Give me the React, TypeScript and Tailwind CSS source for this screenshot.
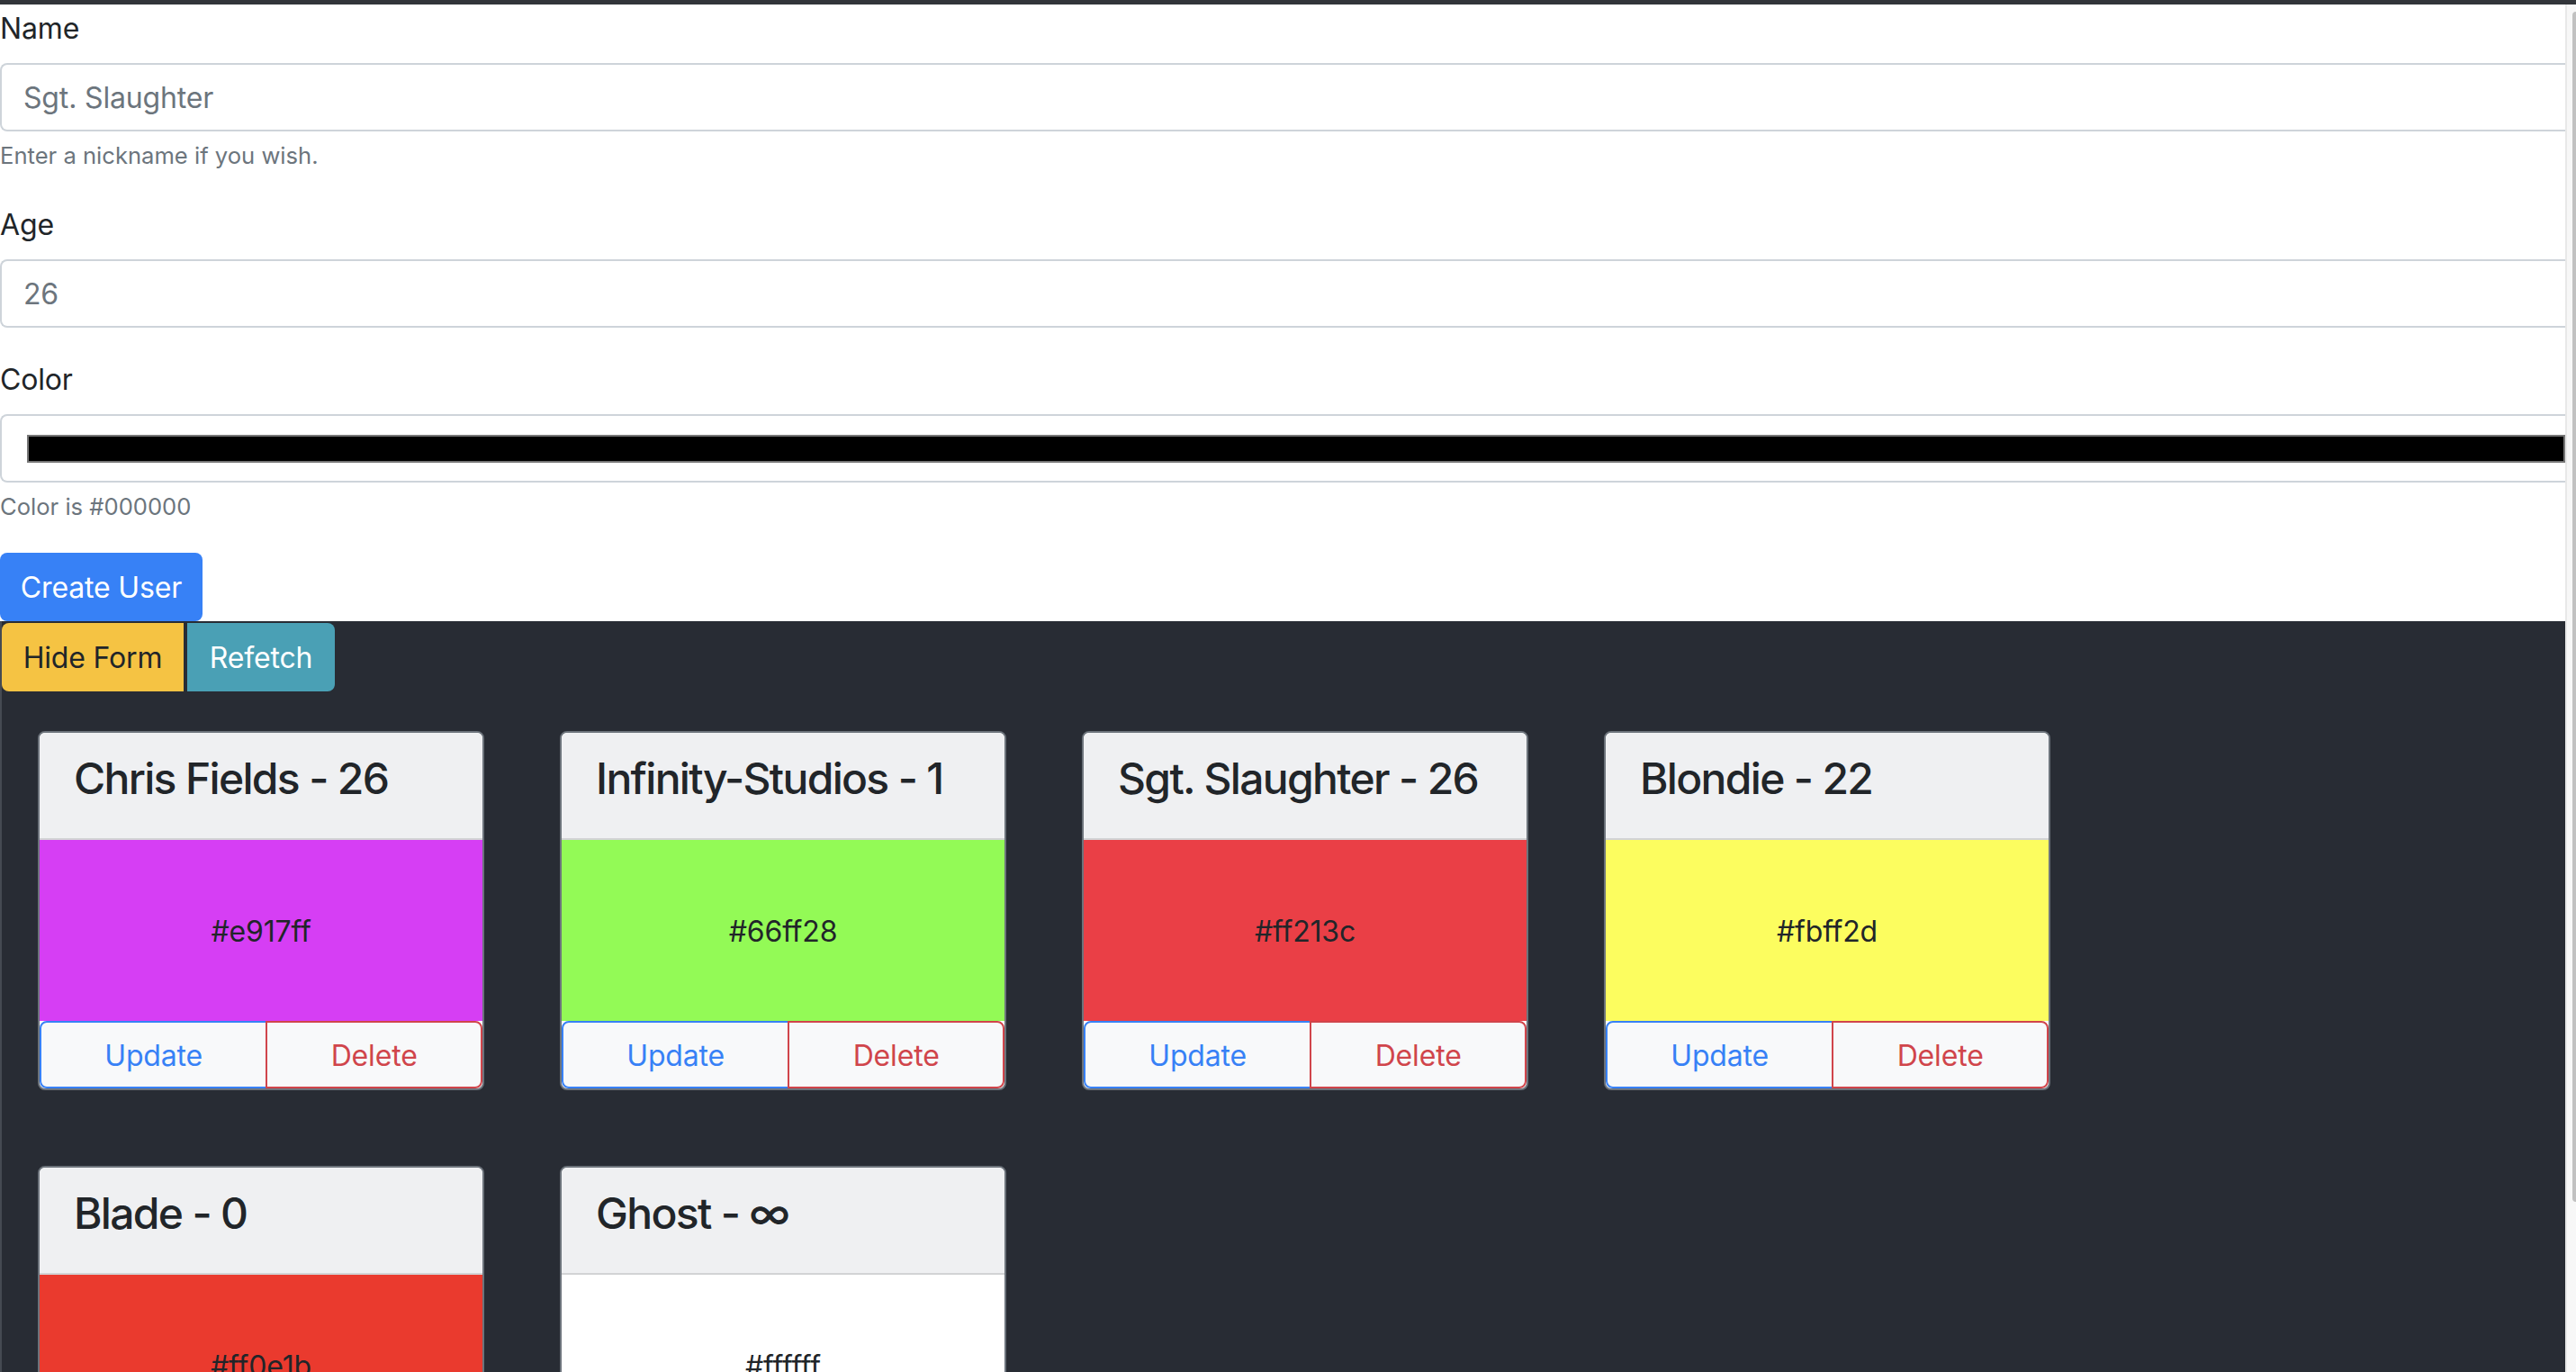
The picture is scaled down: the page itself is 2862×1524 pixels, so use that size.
import React from 'react';

interface User {
  name: string;
  age: string;
  hex: string;
  swatch: string;
}

const users: User[] = [
  { name: 'Chris Fields', age: '26', hex: '#e917ff', swatch: 'bg-[#d63ef4]' },
  { name: 'Infinity-Studios', age: '1', hex: '#66ff28', swatch: 'bg-[#93fa56]' },
  { name: 'Sgt. Slaughter', age: '26', hex: '#ff213c', swatch: 'bg-[#ea3f46]' },
  { name: 'Blondie', age: '22', hex: '#fbff2d', swatch: 'bg-[#fcfd5f]' },
  { name: 'Blade', age: '0', hex: '#ff0e1b', swatch: 'bg-[#ea3a2e]' },
  { name: 'Ghost', age: '∞', hex: '#ffffff', swatch: 'bg-white' },
];

function UserCard({ user }: { user: User }) {
  return (
    <div className="m-[42px] w-[496px] shrink-0 flex flex-col border-2 border-[#6c737b] rounded-[8px] overflow-hidden bg-white">
      <div className="h-[119px] bg-[#eff0f2] border-b-2 border-[#d2d3d5] pl-[38px] pt-[22px]">
        <h4 className="text-[48px] leading-[57.6px] font-medium tracking-[-0.035em] text-[#212529]">
          {user.name} - {user.age}
        </h4>
      </div>
      <div className={`h-[201px] pt-[3px] flex items-center justify-center text-[32px] text-[#212529] ${user.swatch}`}>
        {user.hex}
      </div>
      <div className="h-[75px] flex">
        <button className="flex-auto pt-[2px] border-2 border-[#3781f6] rounded-l-[8px] bg-[#f8f9fa] text-[32px] text-[#3781f6]">
          Update
        </button>
        <button className="relative -ml-[2px] pt-[2px] flex-auto border-2 border-[#d0454b] rounded-r-[8px] bg-[#f8f9fa] text-[32px] text-[#d0454b]">
          Delete
        </button>
      </div>
    </div>
  );
}

export default function App() {
  return (
    <div className="h-[1524px] overflow-hidden flex flex-col bg-white font-['Inter',sans-serif] tracking-[-0.01em] text-[#212529]">
      <div className="h-[5px] shrink-0 bg-[#32353a]" />
      <div className="flex-1 flex min-h-0">
        <div className="flex-1 min-w-0 flex flex-col">
          {/* Form */}
          <div className="pt-[1px]">
            <label className="block pt-[2px] text-[32px] leading-[48px] mb-[14px]">Name</label>
            <input
              readOnly
              value="Sgt. Slaughter"
              className="block w-full h-[76px] border-2 border-r-0 border-[#ced4da] rounded-l-[8px] px-[24px] text-[32px] text-[#6c757d] outline-none"
            />
            <p className="mt-[8px] text-[25.6px] leading-[38px] text-[#6c757d] tracking-[0em]">Enter a nickname if you wish.</p>

            <label className="block mt-[32px] pt-[2px] text-[32px] leading-[48px] mb-[14px]">Age</label>
            <input
              readOnly
              value="26"
              className="block w-full h-[76px] border-2 border-r-0 border-[#ced4da] rounded-l-[8px] px-[24px] text-[32px] text-[#6c757d] outline-none"
            />

            <label className="block mt-[32px] pt-[2px] text-[32px] leading-[48px] mb-[14px]">Color</label>
            <div className="h-[76px] flex items-center border-2 border-r-0 border-[#ced4da] rounded-l-[8px] pl-[28px]">
              <div className="flex-1 h-[31px] bg-black border-2 border-[#767676]" />
            </div>
            <p className="mt-[8px] text-[25.6px] leading-[38px] text-[#6c757d] tracking-[0em]">Color is #000000</p>

            <button className="mt-[32px] pt-[2px] h-[76px] w-[225px] rounded-[8px] bg-[#3781f6] text-white text-[32px]">
              Create User
            </button>
          </div>

          {/* User list */}
          <div className="flex-1 bg-[#282c34] shadow-[inset_2px_0_0_#454a52]">
            <div className="flex ml-[2px] mt-[2px]">
              <button className="h-[76px] pt-[2px] w-[202px] rounded-l-[8px] bg-[#f5c343] text-[#212529] text-[32px]">
                Hide Form
              </button>
              <button className="ml-[4px] pt-[2px] h-[76px] w-[164px] rounded-r-[8px] bg-[#4aa0b5] text-white text-[32px]">
                Refetch
              </button>
            </div>
            <div className="flex flex-wrap pt-[2px]">
              {users.map((u) => (
                <UserCard key={u.name} user={u} />
              ))}
            </div>
          </div>
        </div>

        {/* scrollbar */}
        <div className="w-[12px] shrink-0 border-l-2 border-[#e8e8e8] bg-[#f7f7f7]">
          <div className="ml-[6px] mt-[8px] h-[1322px] w-[4px] rounded-l-full bg-[#c1c1c1]" />
        </div>
      </div>
    </div>
  );
}
